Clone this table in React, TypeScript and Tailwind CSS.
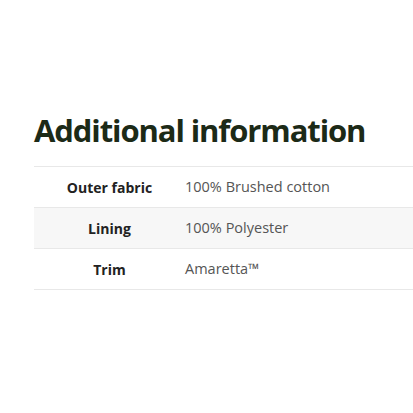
const rows = [
  { label: "Outer fabric", value: "100% Brushed cotton" },
  { label: "Lining", value: "100% Polyester" },
  { label: "Trim", value: "Amaretta™" },
];

export default function App() {
  return (
    <div className="h-[413px] w-[413px] overflow-hidden bg-white pl-[34px] pt-[110px] font-['Open_Sans',sans-serif]">
      <h2 className="text-[31px] font-bold leading-[40px] tracking-[-1.1px] text-[#1c2a17]">
        Additional information
      </h2>
      <div className="mt-[16px] border-t border-[#e8e8e8]">
        {rows.map((row, i) => (
          <div
            key={row.label}
            className={`flex h-[41px] items-center border-b border-[#e8e8e8] text-[14px] ${
              i === 1 ? "bg-[#f7f7f7]" : "bg-white"
            }`}
          >
            <div className="w-[151px] text-center font-bold text-[#222]">{row.label}</div>
            <div className="text-[14.5px] text-[#555]">{row.value}</div>
          </div>
        ))}
      </div>
    </div>
  );
}
